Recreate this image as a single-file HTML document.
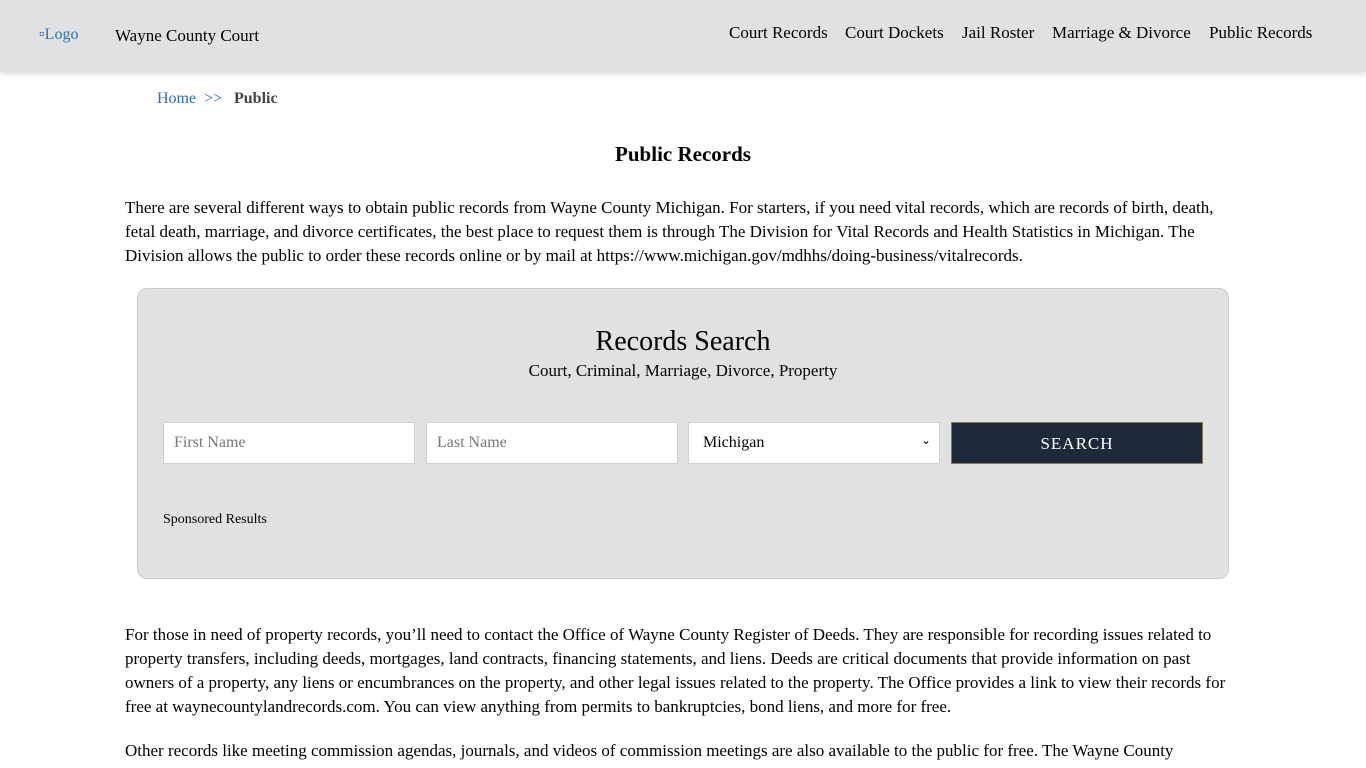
<!DOCTYPE html>
<html><head><style>
body{margin:0;font-family:"Liberation Serif","Times New Roman",Times,"DejaVu Serif",serif;color:#000;background:#fff;width:1366px;height:768px;overflow:hidden;position:relative}
.hdr{position:absolute;left:0;top:0;width:1366px;height:72px;background:#dfe1e3;box-shadow:0 2px 6px rgba(0,0,0,.15)}
.a{position:absolute;font-size:16px;white-space:nowrap}
p{position:absolute;left:125px;width:1200px;margin:0;font-size:17px;line-height:24px;white-space:nowrap}
.box{position:absolute;left:137px;top:288px;width:1090px;height:289px;background:#dfe1e3;border:1px solid #c9cbcd;border-radius:10px}
.in{position:absolute;top:422px;height:42px;width:252px;background:#fff;border:1px solid #cfd1d3;box-sizing:border-box;font-size:16px;padding:11px 10px;color:#777}
</style></head><body>
<div class="hdr"></div>
<div class="a" style="left:39px;top:26px;color:#2a6fb8">▫Logo</div>
<div class="a" style="left:115px;top:26px;font-size:17px">Wayne County Court</div>
<div class="a" style="left:729px;top:23px;font-size:17px">Court Records</div>
<div class="a" style="left:845px;top:23px;font-size:17px">Court Dockets</div>
<div class="a" style="left:962px;top:23px;font-size:17px">Jail Roster</div>
<div class="a" style="left:1052px;top:23px;font-size:17px">Marriage &amp; Divorce</div>
<div class="a" style="left:1209px;top:23px;font-size:17px">Public Records</div>
<div class="a" style="left:157px;top:90px;color:#2a6fb8">Home &nbsp;&gt;&gt;</div>
<div class="a" style="left:234px;top:90px;color:#444;font-weight:bold">Public</div>
<div class="a" style="left:0;width:1366px;text-align:center;top:142px;font-size:21px;font-weight:bold">Public Records</div>
<p style="top:196px">There are several different ways to obtain public records from Wayne County Michigan. For starters, if you need vital records, which are records of birth, death,<br>fetal death, marriage, and divorce certificates, the best place to request them is through The Division for Vital Records and Health Statistics in Michigan. The<br>Division allows the public to order these records online or by mail at https://www.michigan.gov/mdhhs/doing-business/vitalrecords.</p>
<div class="box"></div>
<div class="a" style="left:0;width:1366px;text-align:center;top:326px;font-size:28px">Records Search</div>
<div class="a" style="left:0;width:1366px;text-align:center;top:361px;font-size:17px">Court, Criminal, Marriage, Divorce, Property</div>
<div class="in" style="left:163px">First Name</div>
<div class="in" style="left:426px">Last Name</div>
<div class="in" style="left:688px;color:#000;padding-left:14px">Michigan<span style="position:absolute;right:8px;top:10px;font-size:12px">&#8964;</span></div>
<div class="in" style="left:951px;background:#1e293b;border-color:#8a7a40;color:#fff;text-align:center;letter-spacing:1px;font-size:17px">SEARCH</div>
<div class="a" style="left:163px;top:512px;font-size:14px">Sponsored Results</div>
<p style="top:623px">For those in need of property records, you’ll need to contact the Office of Wayne County Register of Deeds. They are responsible for recording issues related to<br>property transfers, including deeds, mortgages, land contracts, financing statements, and liens. Deeds are critical documents that provide information on past<br>owners of a property, any liens or encumbrances on the property, and other legal issues related to the property. The Office provides a link to view their records for<br>free at waynecountylandrecords.com. You can view anything from permits to bankruptcies, bond liens, and more for free.</p>
<p style="top:739px">Other records like meeting commission agendas, journals, and videos of commission meetings are also available to the public for free. The Wayne County</p>
</body></html>
